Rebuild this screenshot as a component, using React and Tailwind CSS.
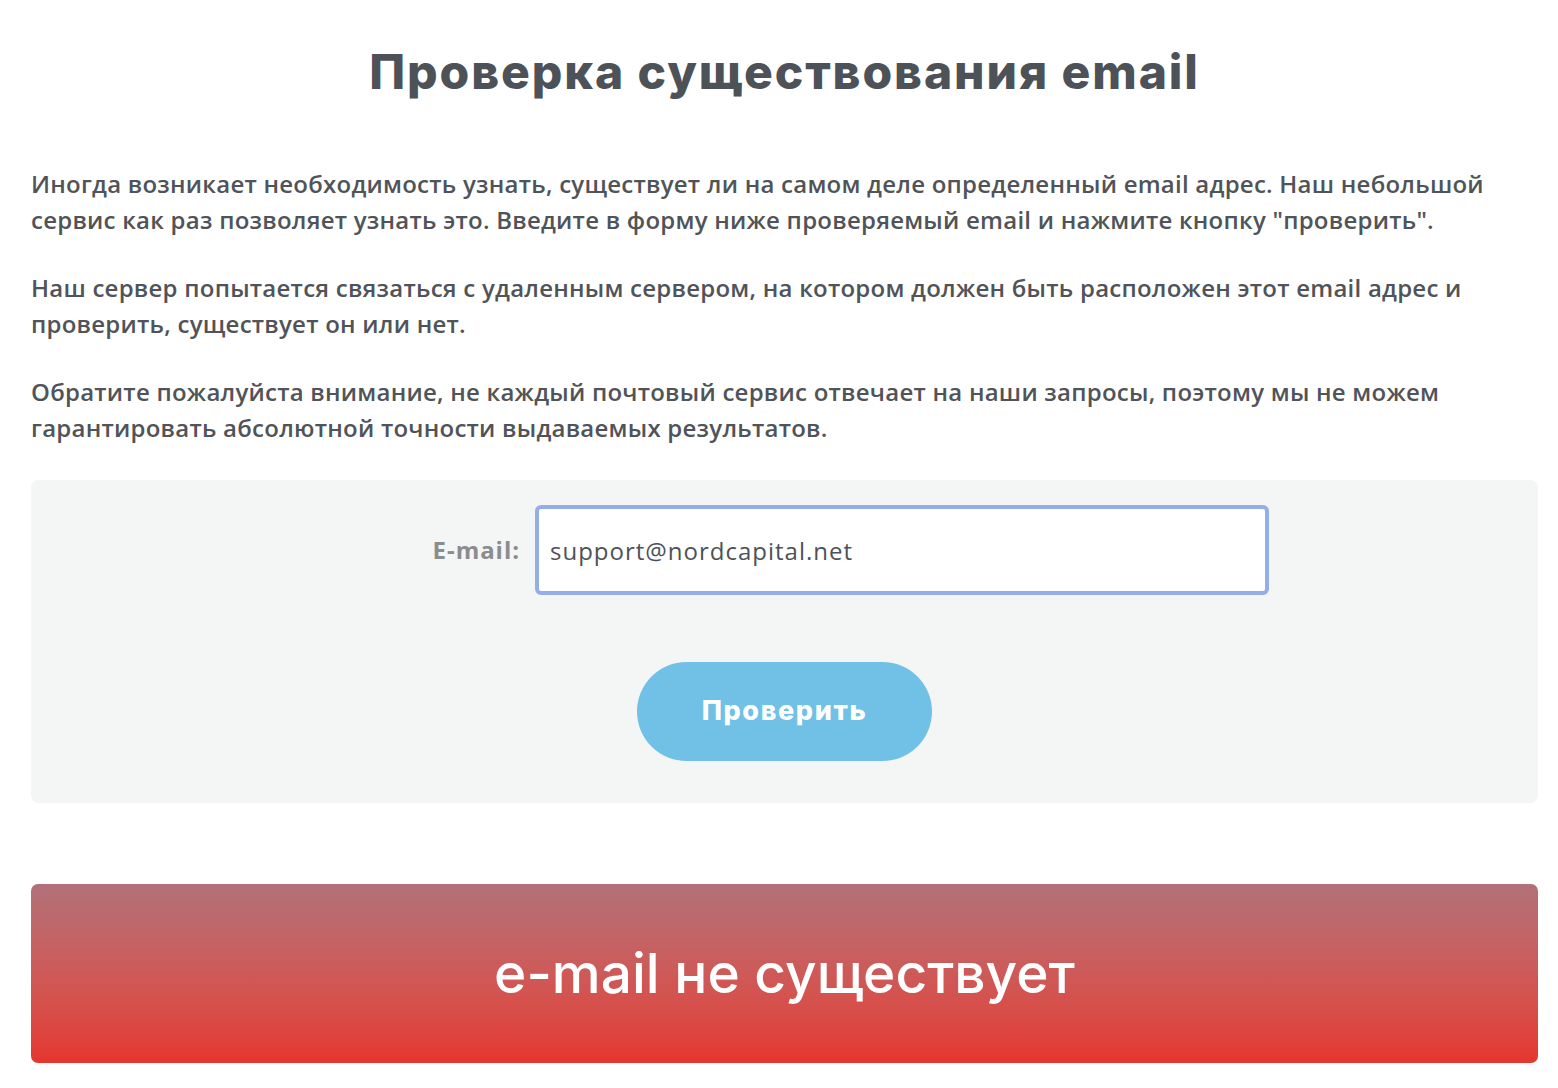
import React, { useState } from "react";

const TITLE_FONT = { fontFamily: '"Inter", "Noto Sans", sans-serif' };

const App = () => {
  const [email, setEmail] = useState("support@nordcapital.net");

  return (
    <div
      className="min-h-screen bg-white pl-[31px] pr-[20px] text-[#505459]"
      style={{ fontFamily: '"Open Sans", "Noto Sans", sans-serif' }}
    >
      {/* ---------- заголовок ---------- */}
      <h1
        className="pt-[40px] text-center text-[48px] leading-[64px] font-extrabold tracking-[0.04em] text-[#4d5258]"
        style={TITLE_FONT}
      >
        Проверка существования email
      </h1>

      {/* ---------- описание ---------- */}
      <div className="mt-[62px] space-y-[32px] text-[24px] leading-[36px] font-semibold tracking-[0.01em]">
        <p>
          Иногда возникает необходимость узнать, существует ли на самом деле
          определенный email адрес. Наш небольшой сервис как раз позволяет
          узнать это. Введите в форму ниже проверяемый email и нажмите кнопку
          "проверить".
        </p>
        <p>
          Наш сервер попытается связаться с удаленным сервером, на котором
          должен быть расположен этот email адрес и проверить, существует он
          или нет.
        </p>
        <p>
          Обратите пожалуйста внимание, не каждый почтовый сервис отвечает на
          наши запросы, поэтому мы не можем гарантировать абсолютной точности
          выдаваемых результатов.
        </p>
      </div>

      {/* ---------- форма ---------- */}
      <div className="mt-[34px] flex flex-col items-center rounded-[8px] bg-[#f4f5f5] pt-[25px] pb-[42px]">
        <div className="flex w-full items-center">
          <label className="flex-1 pr-[15px] text-right text-[24px] font-bold tracking-[0.04em] text-[#8a8c8e]">
            E-mail:
          </label>
          <input
            value={email}
            onChange={(e) => setEmail(e.target.value)}
            className="h-[90px] w-[734px] rounded-[6px] border-4 border-[#93aee8] bg-white px-[11px] text-[24px] font-medium tracking-[1px] text-[#4d5258] outline-none"
          />
          <div className="w-[269px]" />
        </div>
        <button
          className="mt-[67px] h-[99px] w-[295px] rounded-full bg-[#71c1e6] text-[27px] font-extrabold tracking-[0.06em] text-white"
          style={TITLE_FONT}
        >
          Проверить
        </button>
      </div>

      {/* ---------- результат ---------- */}
      <div className="mt-[81px] flex h-[179px] items-center justify-center rounded-[7px] bg-gradient-to-b from-[#b27078] to-[#e6352f]">
        <span
          className="text-[55px] font-medium text-white"
          style={TITLE_FONT}
        >
          e-mail не существует
        </span>
      </div>
    </div>
  );
};

export default App;
